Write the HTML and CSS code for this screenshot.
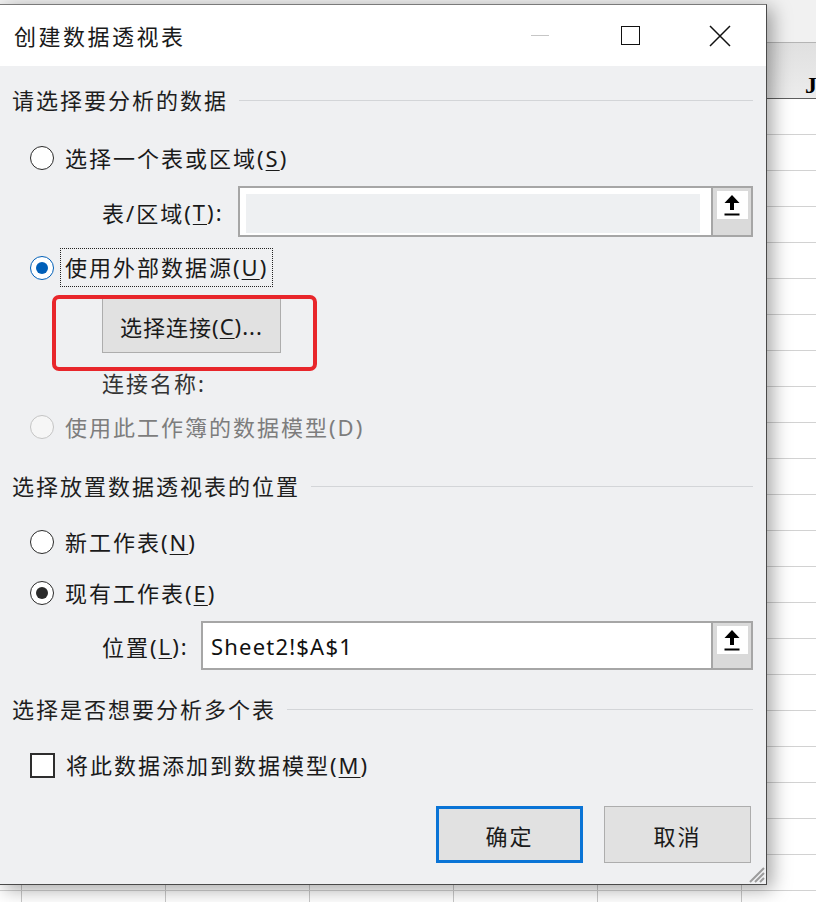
FILE: index.html
```html
<!DOCTYPE html>
<html lang="zh-CN">
<head>
<meta charset="utf-8">
<title>创建数据透视表</title>
<link rel="stylesheet" href="styles.css">
</head>
<body>
<div class="desk">
  <div class="ribbon"></div>
  <div class="colhead"><span class="colj">J</span></div>
  <div class="grid"></div>

  <div class="dialog">
    <div class="titlebar">
      <div class="title">创建数据透视表</div>
      <div class="controls">
        <div class="ctl"><span class="min"></span></div>
        <div class="ctl"><span class="max"></span></div>
        <div class="ctl">
          <svg class="close" width="22" height="22" viewBox="0 0 22 22"><path d="M1 1 L21 21 M21 1 L1 21" stroke="#111" stroke-width="1.5" fill="none"/></svg>
        </div>
      </div>
    </div>

    <div class="body">
      <div class="section s1"><span>请选择要分析的数据</span><i class="rule"></i></div>

      <div class="opt r1"><span class="radio"></span><span class="lbl">选择一个表或区域(<u>S</u>)</span></div>

      <div class="field f1">
        <span class="flabel w-table">表/区域(<u>T</u>):</span>
        <div class="input"><div class="inner"></div></div>
        <div class="pick"><div class="pickin">
          <svg width="16" height="21" viewBox="0 0 16 21"><path d="M8 0 L15.5 8 L10 8 L10 15 L6 15 L6 8 L0.5 8 Z" fill="#000"/><rect x="0.5" y="18.5" width="15" height="2" fill="#000"/></svg>
        </div></div>
      </div>

      <div class="opt r2"><span class="radio blue"></span><span class="lbl focus">使用外部数据源(<u>U</u>)</span></div>

      <div class="btnrow">
        <div class="btn-conn">选择连接(<u>C</u>)...</div>
        <div class="callout"></div>
      </div>

      <div class="conn">连接名称:</div>

      <div class="opt r3"><span class="radio dis"></span><span class="lbl dim">使用此工作簿的数据模型(D)</span></div>

      <div class="section s2"><span>选择放置数据透视表的位置</span><i class="rule"></i></div>

      <div class="opt rn"><span class="radio"></span><span class="lbl">新工作表(<u>N</u>)</span></div>
      <div class="opt re"><span class="radio dark"></span><span class="lbl">现有工作表(<u>E</u>)</span></div>

      <div class="field f2">
        <span class="flabel w-loc">位置(<u>L</u>):</span>
        <div class="input live">Sheet2!$A$1</div>
        <div class="pick"><div class="pickin">
          <svg width="16" height="21" viewBox="0 0 16 21"><path d="M8 0 L15.5 8 L10 8 L10 15 L6 15 L6 8 L0.5 8 Z" fill="#000"/><rect x="0.5" y="18.5" width="15" height="2" fill="#000"/></svg>
        </div></div>
      </div>

      <div class="section s3"><span>选择是否想要分析多个表</span><i class="rule"></i></div>

      <div class="opt chk"><span class="check"></span><span class="lbl">将此数据添加到数据模型(<u>M</u>)</span></div>

      <div class="actions">
        <div class="btn default">确定</div>
        <div class="btn">取消</div>
      </div>
    </div>

    <svg class="grip" width="18" height="18" viewBox="0 0 18 18"><path d="M17 3 L3 17 M17 8 L8 17 M17 13 L13 17" stroke="#9c9c9c" stroke-width="2" fill="none"/></svg>
  </div>
</div>
</body>
</html>
```

FILE: styles.css
```css
html, body {
  margin: 0;
  padding: 0;
}
body {
  font-family: "Noto Sans", "Noto Sans CJK SC", sans-serif;
  color: #1a1a1a;
}
u {
  text-decoration-thickness: 1px;
  text-underline-offset: 3px;
}

.desk {
  position: relative;
  width: 816px;
  height: 902px;
  overflow: hidden;
  background: #fff;
  display: flex;
  flex-direction: column;
}
.ribbon {
  height: 43px;
  background: #f1f1f1;
  border-bottom: 1px solid #b4b4b4;
  box-sizing: border-box;
}
.colhead {
  height: 56px;
  background: linear-gradient(#e0e0e0, #ececec);
  border-bottom: 1px solid #5e5e5e;
  box-sizing: border-box;
  display: flex;
  align-items: flex-end;
  padding-left: 805px;
}
.colj {
  font-family: "Liberation Serif", serif;
  font-weight: bold;
  font-size: 24px;
  line-height: 24px;
  color: #000;
  padding-bottom: 1px;
}
.grid {
  flex: 1;
  background-image:
    linear-gradient(to bottom, transparent 35px, #d2d2d2 35px, #d2d2d2 36px),
    linear-gradient(to right, transparent 143px, #c8c8c8 143px, #c8c8c8 144px);
  background-size: 100% 36px, 144px 100%;
  background-position: 0 0, -122px 0;
}

.dialog {
  position: absolute;
  left: 0;
  top: 4px;
  width: 767px;
  height: 881px;
  box-sizing: border-box;
  border-top: 1px solid #7a7a7a;
  border-right: 1px solid #4a4a4a;
  border-bottom: 1px solid #4a4a4a;
  background: #eff0f2;
  box-shadow: 5px 4px 18px rgba(0, 0, 0, 0.36);
  display: flex;
  flex-direction: column;
}
.titlebar {
  height: 61px;
  background: #fff;
  display: flex;
  align-items: center;
  flex-shrink: 0;
}
.title {
  flex: 1;
  padding-left: 14px;
  font-size: 22px;
  letter-spacing: 2.5px;
  line-height: 30px;
  color: #1a1a1a;
}
.controls {
  display: flex;
  height: 100%;
  margin-right: 1px;
}
.ctl {
  width: 90px;
  display: flex;
  align-items: center;
  justify-content: center;
}
.min {
  width: 18px;
  height: 1px;
  background: #c6c6c6;
}
.max {
  width: 19px;
  height: 19px;
  border: 1.5px solid #111;
  box-sizing: border-box;
}

.body {
  flex: 1;
  position: relative;
  padding-right: 13px;
  display: flex;
  flex-direction: column;
}

.section {
  display: flex;
  align-items: center;
  height: 28px;
  padding-left: 12px;
  font-size: 22px;
  letter-spacing: 2px;
  line-height: 28px;
  color: #1e1e1e;
}
.section .rule {
  flex: 1;
  height: 1px;
  background: #d3d5d8;
  margin-left: 11px;
}
.s1 { margin-top: 20px; }
.s2 { margin-top: 31px; }
.s3 { margin-top: 25px; }

.opt {
  display: flex;
  align-items: center;
  height: 28px;
  padding-left: 30px;
}
.r1 { margin-top: 30px; }
.r2 { margin-top: 11px; height: 39px; }
.r3 { margin-top: 18px; }
.rn { margin-top: 28px; }
.re { margin-top: 23px; }
.chk { margin-top: 28px; }

.radio {
  width: 24px;
  height: 24px;
  border-radius: 50%;
  border: 1.5px solid #2a2a2a;
  background: #fff;
  box-sizing: border-box;
  display: flex;
  align-items: center;
  justify-content: center;
  flex-shrink: 0;
}
.radio.blue {
  border-color: #005fb8;
}
.radio.blue::after {
  content: "";
  width: 12px;
  height: 12px;
  border-radius: 50%;
  background: #005fb8;
}
.radio.dark::after {
  content: "";
  width: 12px;
  height: 12px;
  border-radius: 50%;
  background: #2a2a2a;
}
.radio.dis {
  border-color: #c4c4c4;
  background: #f6f6f6;
}
.check {
  width: 25px;
  height: 25px;
  border: 2px solid #2e2e2e;
  background: #fff;
  box-sizing: border-box;
  flex-shrink: 0;
}

.lbl {
  margin-left: 11px;
  font-size: 22px;
  letter-spacing: 2px;
  line-height: 28px;
  color: #1a1a1a;
  white-space: nowrap;
}
.lbl.focus {
  margin-left: 6px;
  padding: 0 4px;
  border: 1px dotted #222;
  line-height: 37px;
}
.lbl.dim {
  color: #7d7d7d;
}

.field {
  display: flex;
  padding-left: 102px;
}
.f1 { margin-top: 14px; height: 51px; }
.f2 { margin-top: 14px; height: 49px; }
.flabel {
  display: flex;
  align-items: center;
  font-size: 22px;
  letter-spacing: 2px;
  white-space: nowrap;
  flex-shrink: 0;
}
.w-table { width: 136px; }
.w-loc { width: 99px; }
.input {
  flex: 1;
  background: #fff;
  border: 2px solid #a6a6a6;
  border-right: none;
  box-sizing: border-box;
  display: flex;
}
.input .inner {
  flex: 1;
  margin: 6px 11px 2px 6px;
  background: #eef0f2;
}
.input.live {
  align-items: center;
  padding-left: 8px;
  font-size: 22px;
  letter-spacing: 1.2px;
  color: #111;
}
.pick {
  width: 42px;
  flex-shrink: 0;
  border: 2px solid #a6a6a6;
  background: #dadada;
  box-sizing: border-box;
  display: flex;
  justify-content: center;
  padding-top: 3px;
}
.pickin {
  width: 31px;
  height: 28px;
  background: #fff;
  display: flex;
  align-items: center;
  justify-content: center;
}

.btnrow {
  position: relative;
  margin-top: 11px;
  height: 55px;
  padding-left: 102px;
  display: flex;
}
.btn-conn {
  width: 179px;
  height: 55px;
  box-sizing: border-box;
  border: 1px solid #adadad;
  background: #e1e1e1;
  font-size: 22px;
  letter-spacing: 1px;
  display: flex;
  align-items: center;
  justify-content: center;
  color: #1a1a1a;
}
.callout {
  position: absolute;
  left: 52px;
  top: -3px;
  width: 265px;
  height: 76px;
  box-sizing: border-box;
  border: 4px solid #e8262b;
  border-radius: 7px;
}
.conn {
  margin-top: 18px;
  height: 24px;
  line-height: 24px;
  padding-left: 102px;
  font-size: 22px;
  letter-spacing: 2px;
  color: #333;
}

.actions {
  margin-top: 27px;
  display: flex;
  justify-content: flex-end;
  gap: 21px;
  padding-right: 2px;
}
.btn {
  width: 147px;
  height: 57px;
  box-sizing: border-box;
  background: #e1e1e1;
  border: 1px solid #adadad;
  font-size: 22px;
  letter-spacing: 2px;
  display: flex;
  align-items: center;
  justify-content: center;
  color: #1a1a1a;
}
.btn.default {
  border: 3px solid #0a74d6;
}
.grip {
  position: absolute;
  right: 1px;
  bottom: 1px;
}
```
